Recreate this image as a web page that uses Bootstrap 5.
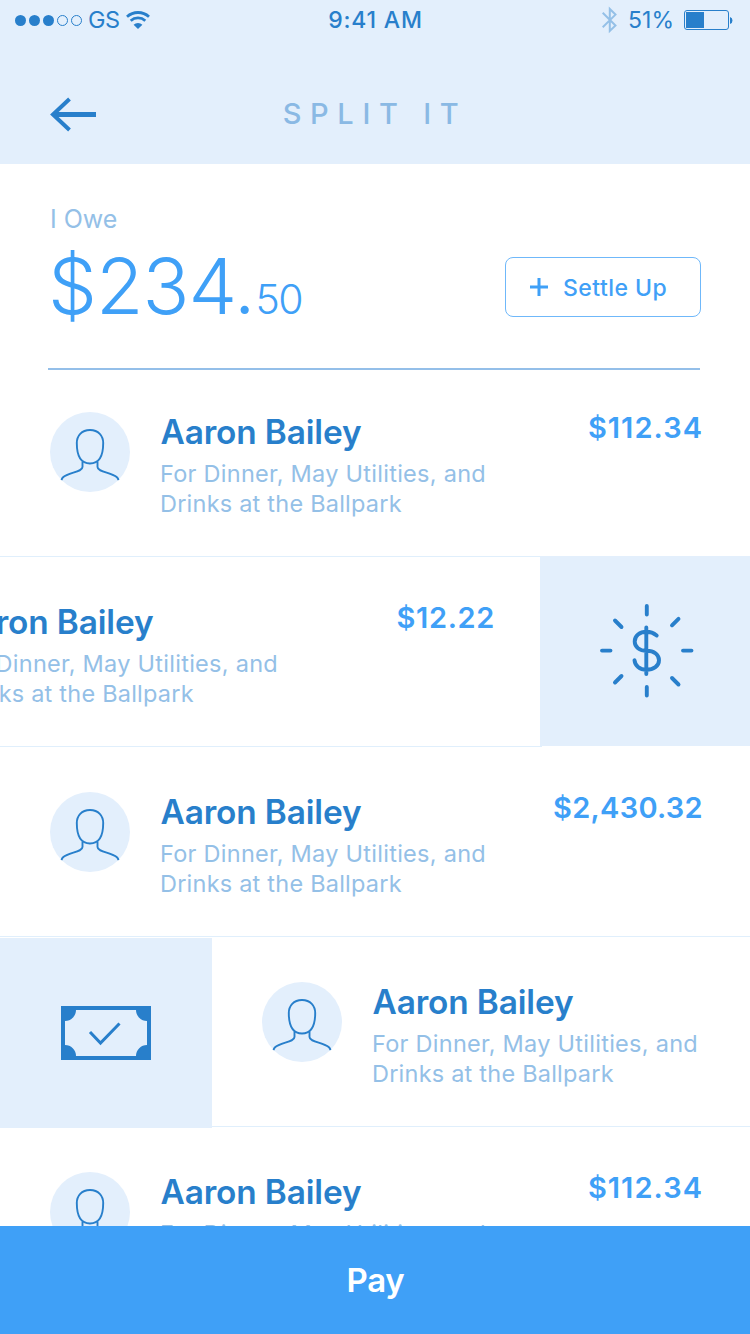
<!DOCTYPE html>
<html lang="en">
<head>
<meta charset="utf-8">
<meta name="viewport" content="width=device-width, initial-scale=1">
<title>Split It</title>
<link href="https://cdn.jsdelivr.net/npm/bootstrap@5.3.0/dist/css/bootstrap.min.css" rel="stylesheet">
<style>
  :root { --deep: #287fcb; --bright: #3fa0f7; --soft: #94c0e7; --pale: #e3effc; }
  body { font-family: Inter, "Liberation Sans", sans-serif; color: var(--deep); }
  svg { display: block; flex: none; }
  .app-head { background: var(--pale); height: 164px; }
  .status { height: 40px; padding: 0 17px 0 15px; font-size: 23px; line-height: 40px; }
  .status > div { flex: 1 1 0; }
  .carrier { font-size: 23.5px; letter-spacing: -.6px; padding-left: 1px; }
  .cell-wifi { margin-left: 7px; }
  .clock { font-weight: 500; letter-spacing: .8px; padding-left: 3px; }
  .battery-text { margin: 0 10px 0 11px; }
  .titlebar { height: 124px; padding: 23px 50px 0; }
  .titlebar h1 { font-size: 29px; font-weight: 500; letter-spacing: 8.7px; line-height: 38px; color: #8ab9e4; }
  .side { width: 46px; }
  .summary { height: 206px; margin: 0 50px 0 48px; border-bottom: 2px solid #94bfe9; }
  .owe { font-size: 25px; line-height: 30px; color: var(--soft); padding: 40px 0 0 2px; }
  .total { font-size: 77.5px; font-weight: 300; line-height: 94px; margin-top: 5px; color: var(--bright); letter-spacing: -1px; }
  .total small { font-size: 41px; font-weight: 300; letter-spacing: -1.6px; padding-left: 1px; }
  .btn-settle { --bs-btn-color: var(--bright); --bs-btn-border-color: #6fb8fa; --bs-btn-border-radius: 8px;
    width: 196px; height: 60px; margin-top: 93px; margin-right: -1px; padding: 0 0 0 24px; font-size: 23px; font-weight: 500; letter-spacing: .45px; }
  .settle-label { padding-top: 2px; margin-left: 15px; }
  .debts { margin-top: -3px; min-height: 0; }
  .debts > li { height: 190px; }
  .entry { width: 750px; height: 190px; padding: 45px 48px 0 50px; border-bottom: 1px solid #e0effc; }
  .avatar { width: 80px; height: 80px; background: var(--pale); }
  .details { margin-left: 30px; }
  .who { font-size: 33.4px; font-weight: 600; line-height: 40px; margin: 0; letter-spacing: -.14px; padding-left: .5px; }
  .why { font-size: 23.5px; line-height: 30px; color: var(--soft); margin: 7px 0 0; letter-spacing: .27px; white-space: nowrap; }
  .why span { letter-spacing: .22px; }
  .sum { font-size: 29px; font-weight: 600; line-height: 32px; color: var(--bright); letter-spacing: 1.05px; margin-right: -1px; }
  .swiped-left .sum { letter-spacing: .65px; }
  .sum-long { letter-spacing: .3px; }
  .swiped-left .entry { margin-left: -208px; }
  .action { background: var(--pale); height: 190px; position: relative; }
  .swiped-left .action { width: 210px; margin: -1px 0 0 -2px; }
  .swiped-right .action { width: 212px; margin-top: 1px; }
  .pay { height: 108px; background: var(--bright); border: 0; border-radius: 0; color: #fff; font-size: 33px; font-weight: 600; padding: 8px 0 6px 1px; letter-spacing: -.3px; }
</style>
</head>
<body>
<svg width="0" height="0" class="position-absolute">
  <symbol id="person" viewBox="0 0 80 80">
    <g fill="none" stroke="#287fcb" stroke-width="1.9">
      <path d="M40 18C31.500 18 26.800 24 26.800 31C26.800 44 30.500 51.500 40 51.500S53.200 44 53.200 31C53.200 24 48.500 18 40 18Z"/>
      <path d="M32.500 49.500V55C32.500 60 18.500 60.500 12.800 65.500C12 66.300 11.700 67 11.600 68.200M47.500 49.500V55C47.500 60 61.500 60.500 67.200 65.500C68 66.300 68.300 67 68.400 68.200"/>
    </g>
  </symbol>
</svg>
<main class="vh-100 d-flex flex-column overflow-hidden">
  <header class="app-head flex-shrink-0">
    <div class="status d-flex">
      <div class="d-flex align-items-center">
        <svg width="68" height="40" viewBox="0 0 68 40" fill="#287fcb"><circle cx="5.500" cy="20.500" r="5.500"/><circle cx="19.500" cy="20.500" r="5.500"/><circle cx="33.500" cy="20.500" r="5.500"/><g fill="none" stroke="#287fcb"><circle cx="47.500" cy="20.500" r="5"/><circle cx="61.500" cy="20.500" r="5"/></g></svg>
        <span class="carrier ms-1">GS</span>
        <svg class="cell-wifi" width="24" height="40" viewBox="0 0 24 40"><g fill="none" stroke="#287fcb" stroke-width="2.800"><path d="M1 16.700A16.500 16.500 0 0 1 23 16.700"/><path d="M4.700 20.700A11 11 0 0 1 19.300 20.700"/></g><path fill="#287fcb" d="M7.600 24.800A6.500 6.500 0 0 1 16.400 24.800L12 29Z"/></svg>
      </div>
      <div class="clock text-center">9:41 AM</div>
      <div class="d-flex justify-content-end align-items-center">
        <svg width="15" height="40" viewBox="0 0 15 40" fill="none" stroke="#94c0e7" stroke-width="2"><path d="M.7 12.700L13.500 25.500L7.800 31V9L13.500 14.600L.7 27.300"/></svg>
        <span class="battery-text">51%</span>
        <svg width="49" height="40" viewBox="0 0 49 40"><rect x=".5" y="10.500" width="44" height="19" rx="2.500" fill="none" stroke="#287fcb"/><path fill="#287fcb" d="M2 12H20V28H2ZM46 17A3.700 3.700 0 0 1 46 24Z"/></svg>
      </div>
    </div>
    <div class="titlebar d-flex align-items-center justify-content-between">
      <a href="#" class="side" aria-label="Back"><svg width="46" height="40" viewBox="0 0 46 40" fill="none" stroke="#287fcb"><path stroke-width="5" d="M4 20.500H46"/><path stroke-width="4" d="M19.500 5L3 20.500L19.500 36"/></svg></a>
      <h1 class="m-0">SPLIT IT</h1>
      <span class="side"></span>
    </div>
  </header>

  <section class="summary d-flex justify-content-between align-items-start flex-shrink-0">
    <div>
      <div class="owe">I Owe</div>
      <div class="total">$234.<small>50</small></div>
    </div>
    <button class="btn btn-settle d-flex align-items-center">
      <svg width="18" height="18" viewBox="0 0 18 18" stroke="#3fa0f7" stroke-width="3"><path d="M0 9H18M9 0V18"/></svg>
      <span class="settle-label">Settle Up</span>
    </button>
  </section>

  <ul class="debts list-unstyled mb-0 flex-grow-1 overflow-hidden">
    <li class="d-flex">
      <div class="entry d-flex align-items-start flex-shrink-0">
        <div class="avatar rounded-circle flex-shrink-0"><svg width="80" height="80"><use href="#person"/></svg></div>
        <div class="details flex-grow-1"><h2 class="who">Aaron Bailey</h2><p class="why">For Dinner, May Utilities, and<br><span>Drinks at the Ballpark</span></p></div>
        <div class="sum">$112.34</div>
      </div>
    </li>
    <li class="d-flex swiped-left">
      <div class="entry d-flex align-items-start flex-shrink-0">
        <div class="avatar rounded-circle flex-shrink-0"><svg width="80" height="80"><use href="#person"/></svg></div>
        <div class="details flex-grow-1"><h2 class="who">Aaron Bailey</h2><p class="why">For Dinner, May Utilities, and<br><span>Drinks at the Ballpark</span></p></div>
        <div class="sum">$12.22</div>
      </div>
      <div class="action flex-shrink-0">
        <svg width="210" height="190" viewBox="0 0 210 190" fill="none" stroke="#287fcb" stroke-width="3.900" stroke-linecap="round">
          <path d="M106.800 50V58.500M106.800 131V139.500M62 94.600H70.500M143 94.600H151.500M75 64.500L81.500 71M138.500 62.800L132 69.300M75 126.500L81.500 120M138.500 128.500L132 122"/>
          <path d="M106.300 71.500V118M116.700 79.500C113.500 77 110.500 75.800 106.700 75.800C99.500 75.800 94.700 80 94.700 85.500C94.700 91 99.500 94.800 106.500 94.800C114.500 94.800 119 99 119 104.200C119 110 113.500 113.800 106.500 113.800C99.500 113.800 95 109.500 94.500 104.300"/>
        </svg>
      </div>
    </li>
    <li class="d-flex">
      <div class="entry d-flex align-items-start flex-shrink-0">
        <div class="avatar rounded-circle flex-shrink-0"><svg width="80" height="80"><use href="#person"/></svg></div>
        <div class="details flex-grow-1"><h2 class="who">Aaron Bailey</h2><p class="why">For Dinner, May Utilities, and<br><span>Drinks at the Ballpark</span></p></div>
        <div class="sum sum-long">$2,430.32</div>
      </div>
    </li>
    <li class="d-flex swiped-right">
      <div class="action flex-shrink-0">
        <svg width="212" height="190" viewBox="0 0 212 190">
          <path fill="#287fcb" fill-rule="evenodd" d="M61 68H151V122H61ZM76 72A11 11 0 0 1 65 83V107A11 11 0 0 1 76 118H136A11 11 0 0 1 147 107V83A11 11 0 0 1 136 72Z"/>
          <path fill="none" stroke="#287fcb" stroke-width="3" d="M90 94L100.500 105L119.500 85.500"/>
        </svg>
      </div>
      <div class="entry d-flex align-items-start flex-shrink-0">
        <div class="avatar rounded-circle flex-shrink-0"><svg width="80" height="80"><use href="#person"/></svg></div>
        <div class="details flex-grow-1"><h2 class="who">Aaron Bailey</h2><p class="why">For Dinner, May Utilities, and<br><span>Drinks at the Ballpark</span></p></div>
      </div>
    </li>
    <li class="d-flex">
      <div class="entry d-flex align-items-start flex-shrink-0">
        <div class="avatar rounded-circle flex-shrink-0"><svg width="80" height="80"><use href="#person"/></svg></div>
        <div class="details flex-grow-1"><h2 class="who">Aaron Bailey</h2><p class="why">For Dinner, May Utilities, and<br><span>Drinks at the Ballpark</span></p></div>
        <div class="sum">$112.34</div>
      </div>
    </li>
  </ul>
  <button class="btn pay w-100 flex-shrink-0">Pay</button>
</main>
<script src="https://cdn.jsdelivr.net/npm/bootstrap@5.3.0/dist/js/bootstrap.bundle.min.js"></script>
</body>
</html>
